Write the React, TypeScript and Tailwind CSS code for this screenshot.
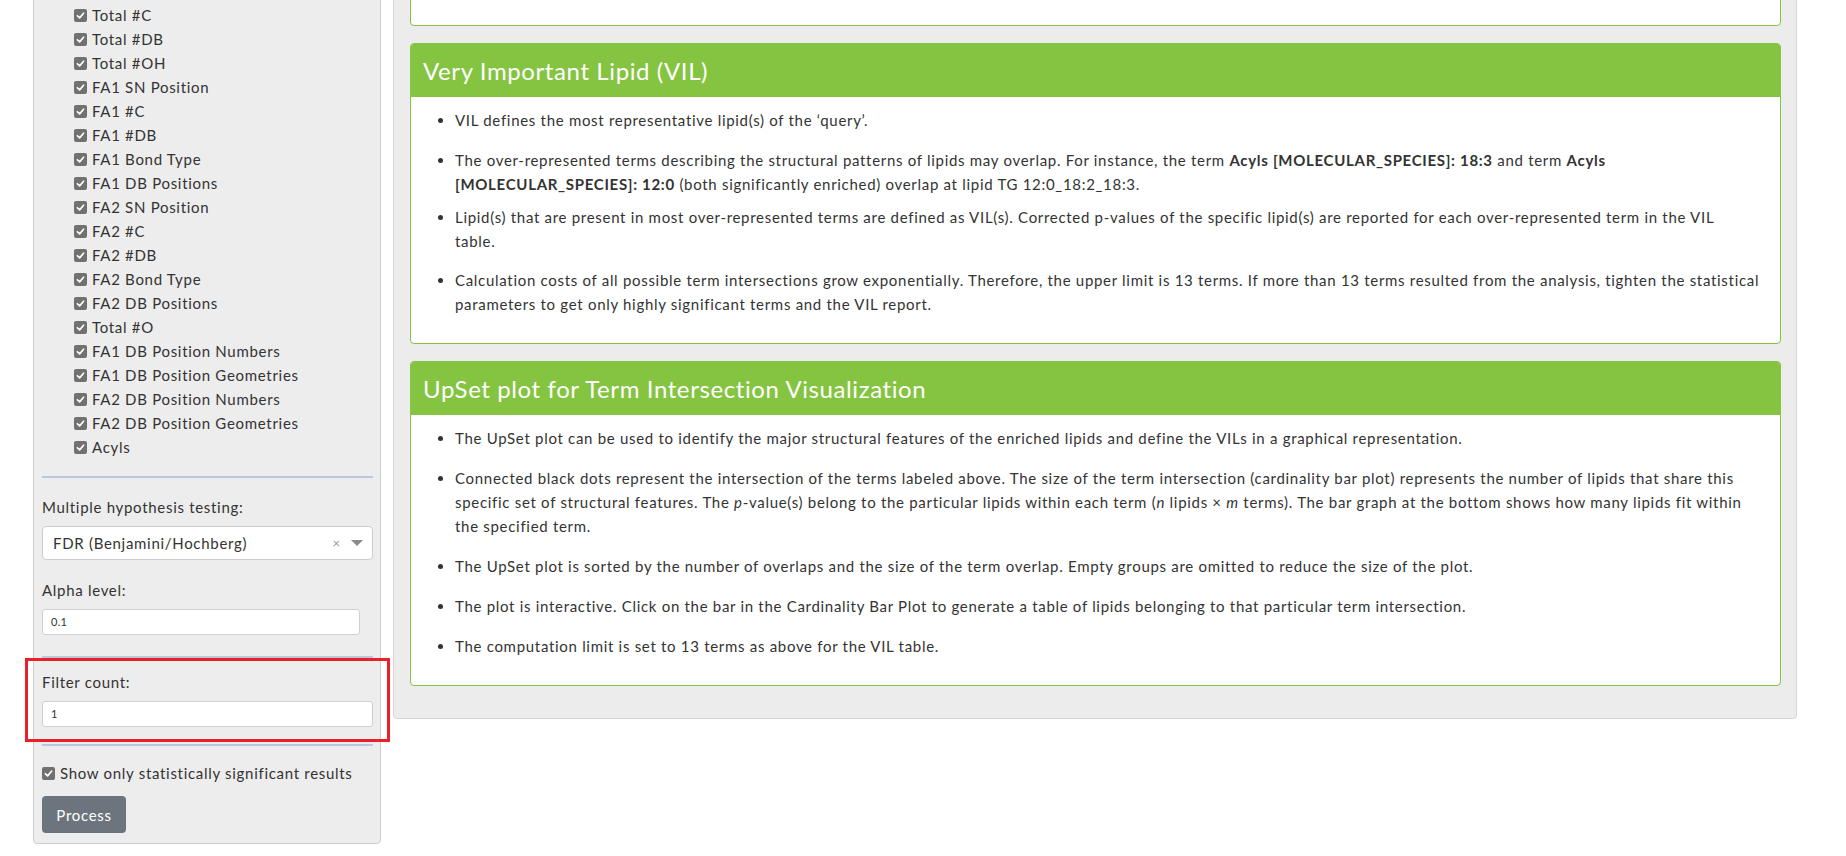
import React from "react";

function Check() {
  return (
    <span className="inline-flex w-[13px] h-[13px] rounded-[2px] bg-[#717171] items-center justify-center shrink-0">
      <svg width="9" height="9" viewBox="0 0 10 10">
        <path d="M1.6 5.3 L4 7.6 L8.4 2.5" stroke="white" strokeWidth="1.9" fill="none" strokeLinecap="round" strokeLinejoin="round" />
      </svg>
    </span>
  );
}

const items = [
  "Lipid Class",
  "Species",
  "Total #C",
  "Total #DB",
  "Total #OH",
  "FA1 SN Position",
  "FA1 #C",
  "FA1 #DB",
  "FA1 Bond Type",
  "FA1 DB Positions",
  "FA2 SN Position",
  "FA2 #C",
  "FA2 #DB",
  "FA2 Bond Type",
  "FA2 DB Positions",
  "Total #O",
  "FA1 DB Position Numbers",
  "FA1 DB Position Geometries",
  "FA2 DB Position Numbers",
  "FA2 DB Position Geometries",
  "Acyls",
];

function Hr({ className = "" }: { className?: string }) {
  return <div className={"h-[2px] bg-[#b7c8df] " + className} />;
}

function Sidebar() {
  return (
    <div className="w-[348px] shrink-0 -mt-[60px] self-start bg-[#ededed] border border-[#cfcfcf] rounded-[4px] pt-[14px] pl-[8px] pr-[7px] pb-[10px] text-[#333]">
      <div className="pl-[32px]">
        {items.map((t) => (
          <div key={t} className="flex items-center h-[24px] gap-[5px]">
            <Check />
            <span>{t}</span>
          </div>
        ))}
      </div>
      <Hr className="mt-[17px]" />
      <div className="mt-[17px] leading-[24px]">Multiple hypothesis testing:</div>
      <div className="mt-[7px] h-[34px] bg-white border border-[#cccccc] rounded-[4px] flex items-center pl-[10px] pr-[9px]">
        <span className="flex-1">FDR (Benjamini/Hochberg)</span>
        <span className="text-[#999] text-[13px] mr-[11px] tracking-normal">×</span>
        <svg width="12" height="7" viewBox="0 0 12 7">
          <path d="M0 0 H12 L6 6 Z" fill="#8a8a8a" />
        </svg>
      </div>
      <div className="mt-[18px] leading-[24px]">Alpha level:</div>
      <div className="mt-[7px] w-[318px] h-[26px] bg-white border border-[#cfcfcf] rounded-[3px] flex items-center pl-[8px] text-[11px] tracking-[0.3px]">
        0.1
      </div>
      <Hr className="mt-[21px]" />
      <div className="relative pt-[12px] pb-[15px]">
        <div className="leading-[24px]">Filter count:</div>
        <div className="mt-[7px] h-[26px] bg-white border border-[#cfcfcf] rounded-[3px] flex items-center pl-[8px] text-[11px]">
          1
        </div>
        <div className="absolute top-0 bottom-0 -left-[17px] -right-[17px] border-[3px] border-[#e8202a] pointer-events-none" />
      </div>
      <Hr className="mt-[2px]" />
      <div className="mt-[15px] flex items-center h-[24px] gap-[5px]">
        <Check />
        <span>Show only statistically significant results</span>
      </div>
      <button className="mt-[11px] w-[84px] h-[37px] rounded-[4px] bg-[#6c757d] text-white text-[15px]">
        Process
      </button>
    </div>
  );
}

function Card({ title, children }: { title: string; children: React.ReactNode }) {
  return (
    <div className="mb-[17px] border border-[#84c441] rounded-[4px] bg-white overflow-hidden">
      <div className="h-[53px] bg-[#84c441] flex items-center px-[12px] text-white text-[24px] tracking-[0.6px]">{title}</div>
      <ul className="list-disc pl-[44px] pr-[12px] pt-[11px] pb-[11px] leading-[24px] whitespace-nowrap">{children}</ul>
    </div>
  );
}

function Main() {
  return (
    <div className="w-[1404px] shrink-0 -mt-[100px] self-start bg-[#ececec] border border-[#d6d6d6] rounded-[4px] pt-[16px] pl-[16px] pr-[15px] pb-[15px] text-[#333]">
      <div className="mb-[17px] h-[109px] border border-[#84c441] rounded-[4px] bg-white" />
      <Card title="Very Important Lipid (VIL)">
        <li className="mb-[16px]">VIL defines the most representative lipid(s) of the ‘query’.</li>
        <li className="mb-[9px]">
          The over-represented terms describing the structural patterns of lipids may overlap. For instance, the term{" "}
          <b>Acyls [MOLECULAR_SPECIES]: 18:3</b> and term <b>Acyls</b>
          <br />
          <b>[MOLECULAR_SPECIES]: 12:0</b> (both significantly enriched) overlap at lipid TG 12:0_18:2_18:3.
        </li>
        <li className="mb-[15px]">
          Lipid(s) that are present in most over-represented terms are defined as VIL(s). Corrected p-values of the specific lipid(s) are reported for each over-represented term in the VIL
          <br />
          table.
        </li>
        <li className="mb-[16px]">
          Calculation costs of all possible term intersections grow exponentially. Therefore, the upper limit is 13 terms. If more than 13 terms resulted from the analysis, tighten the statistical
          <br />
          parameters to get only highly significant terms and the VIL report.
        </li>
      </Card>
      <Card title="UpSet plot for Term Intersection Visualization">
        <li className="mb-[16px]">
          The UpSet plot can be used to identify the major structural features of the enriched lipids and define the VILs in a graphical representation.
        </li>
        <li className="mb-[16px]">
          Connected black dots represent the intersection of the terms labeled above. The size of the term intersection (cardinality bar plot) represents the number of lipids that share this
          <br />
          specific set of structural features. The <i>p</i>-value(s) belong to the particular lipids within each term (<i>n</i> lipids × <i>m</i> terms). The bar graph at the bottom shows how many lipids fit within
          <br />
          the specified term.
        </li>
        <li className="mb-[16px]">
          The UpSet plot is sorted by the number of overlaps and the size of the term overlap. Empty groups are omitted to reduce the size of the plot.
        </li>
        <li className="mb-[16px]">
          The plot is interactive. Click on the bar in the Cardinality Bar Plot to generate a table of lipids belonging to that particular term intersection.
        </li>
        <li className="mb-[16px]">The computation limit is set to 13 terms as above for the VIL table.</li>
      </Card>
    </div>
  );
}

export default function App() {
  return (
    <div className="w-[1846px] h-[856px] overflow-hidden bg-white font-['Lato',sans-serif] text-[15px] leading-[24px] tracking-[0.7px]">
      <div className="flex pl-[33px] gap-[12px]">
        <Sidebar />
        <Main />
      </div>
    </div>
  );
}
